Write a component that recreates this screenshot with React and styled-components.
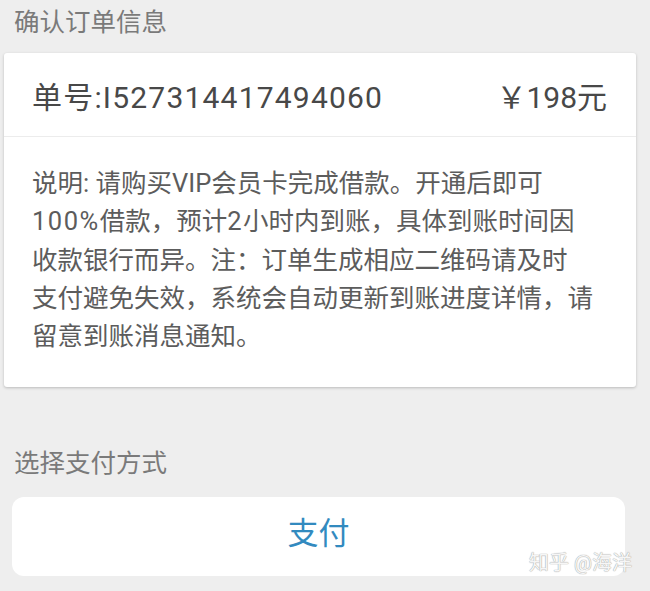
import styled, { createGlobalStyle } from "styled-components";

const Global = createGlobalStyle`
  html, body {
    margin: 0;
    padding: 0;
    background: #eeeeee;
  }
  body {
    font-family: Roboto, "Noto Sans CJK SC", sans-serif;
  }
`;

const Page = styled.div`
  position: relative;
  width: 650px;
  height: 591px;
  overflow: hidden;
  background: #eeeeee;
`;

const SectionTitle = styled.div`
  padding-left: 14px;
  font-size: 25.5px;
  color: #7a7a7a;
  height: ${(p) => p.h}px;
  line-height: ${(p) => p.lh}px;
`;

const Card = styled.div`
  margin: 0 14px 0 4px;
  background: #fff;
  border-radius: 3px;
  box-shadow: 0 1px 3px rgba(0, 0, 0, 0.22);
`;

const HeadRow = styled.div`
  display: flex;
  justify-content: space-between;
  align-items: center;
  height: 83px;
  padding: 0 29px 0 28px;
  font-size: 30px;
  color: #484848;
  border-bottom: 1px solid #ececec;
`;

const OrderNo = styled.span`
  letter-spacing: 1.2px;
`;

const Body = styled.div`
  padding: 27px 20px 32px 28px;
  font-size: 25.5px;
  line-height: 38.3px;
  color: #5c5c5c;
`;

const Line = styled.div`
  white-space: nowrap;
`;

const Digits = styled.span`
  letter-spacing: 1.5px;
`;

const PayButton = styled.button`
  display: flex;
  align-items: center;
  justify-content: center;
  box-sizing: border-box;
  width: 613px;
  height: 79px;
  margin-left: 12px;
  border: none;
  border-radius: 12px;
  background: #fff;
  color: #328abf;
  font-family: Roboto, "Noto Sans CJK SC", sans-serif;
  font-size: 31px;
  padding: 0 0 12px 0;
`;

const Watermark = styled.div`
  position: absolute;
  right: 18px;
  top: 547px;
  font-size: 20px;
  color: #f6f6f6;
  text-shadow: 0 0 1px #999, 0 0 1px #bbb;
`;

export default function App() {
  return (
    <Page>
      <Global />
      <SectionTitle h={53} lh={44}>确认订单信息</SectionTitle>
      <Card>
        <HeadRow>
          <OrderNo>单号:I527314417494060</OrderNo>
          <span>￥198元</span>
        </HeadRow>
        <Body>
          <Line>说明: 请购买VIP会员卡完成借款。开通后即可</Line>
          <Line>
            <Digits>100%</Digits>借款，预计<Digits>2</Digits>小时内到账，具体到账时间因
          </Line>
          <Line>收款银行而异。注：订单生成相应二维码请及时</Line>
          <Line>支付避免失效，系统会自动更新到账进度详情，请</Line>
          <Line>留意到账消息通知。</Line>
        </Body>
      </Card>
      <SectionTitle h={110} lh={152}>选择支付方式</SectionTitle>
      <PayButton>支付</PayButton>
      <Watermark>知乎 @海洋</Watermark>
    </Page>
  );
}
